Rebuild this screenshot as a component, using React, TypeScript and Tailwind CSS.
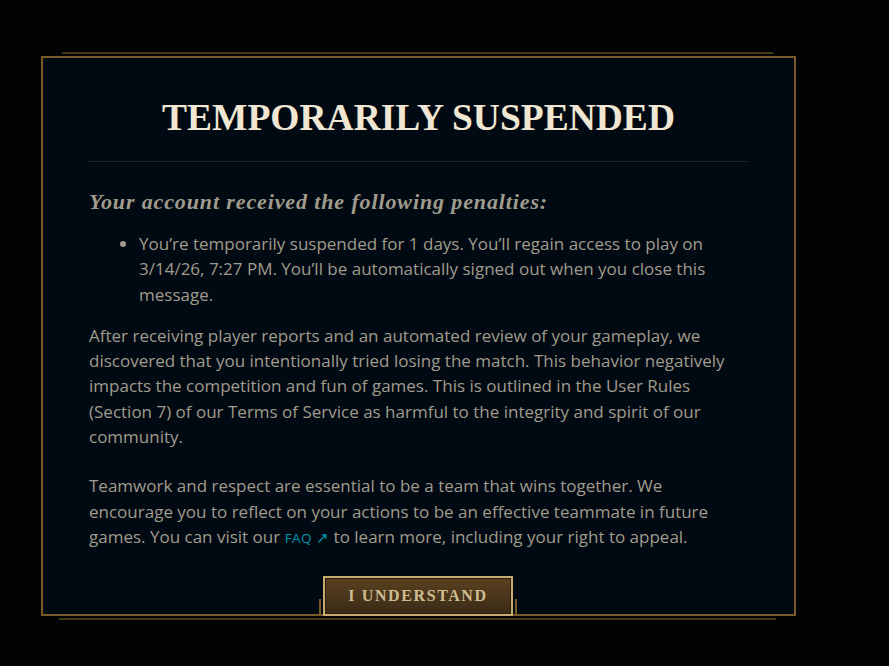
export default function App() {
  return (
    <main className="min-h-[666px] w-full bg-[#020304] pt-[56px] pl-[41px]">
      <div className="relative w-[755px] h-[560px]">
        {/* top decorative rail */}
        <div className="absolute left-[18px] right-[20px] top-[-4px] h-[4px] border-t-2 border-[#463714] [clip-path:polygon(4px_0,calc(100%-4px)_0,100%_100%,0_100%)]" />
        {/* bottom decorative rail */}
        <div className="absolute left-[18px] right-[20px] bottom-[-4px] h-[4px] border-b-2 border-[#463714]" />

        <div className="relative h-full border-2 border-[#785a28] bg-[#010a13] px-[46px] pt-[36px]">
          <h1 className="text-center font-['Liberation_Serif',serif] font-bold text-[37.5px] leading-[48px] text-[#f0e6d2]">
            TEMPORARILY SUSPENDED
          </h1>
          <div className="mt-[19px] h-px bg-[#1e2328]" />

          <h2 className="mt-[26px] font-['Liberation_Serif',serif] italic font-bold text-[22px] leading-[28px] tracking-[0.04em] text-[#a09b8c]">
            Your account received the following penalties:
          </h2>

          <div className="pr-[21px] font-['Open_Sans',sans-serif] text-[17px] leading-[25.3px] text-[#a09b8c]">
            <ul className="mt-[15px] pl-[50px] list-disc">
              <li>
                You’re temporarily suspended for 1 days. You’ll regain access to play on 3/14/26, 7:27 PM. You’ll be automatically signed out when you close this message.
              </li>
            </ul>
            <p className="mt-[16px]">
              After receiving player reports and an automated review of your gameplay, we discovered that you intentionally tried losing the match. This behavior negatively impacts the competition and fun of games. This is outlined in the User Rules (Section 7) of our Terms of Service as harmful to the integrity and spirit of our community.
            </p>
            <p className="mt-[24px]">
              Teamwork and respect are essential to be a team that wins together. We encourage you to reflect on your actions to be an effective teammate in future games. You can visit our{" "}
              <a className="inline-block leading-none text-[13.5px] tracking-[0.03em] text-[#0397ab]">
                FAQ <span className="text-[15px]">↗</span>
              </a>{" "}
              to learn more, including your right to appeal.
            </p>
          </div>
        </div>

        {/* button */}
        <div className="absolute bottom-0 left-[278px] flex items-end">
          <div className="w-[2px] h-[15px] bg-[#785a28] mb-[2px]" />
          <button className="mx-[2px] w-[190px] h-[40px] border-2 border-[#c8aa6e] bg-gradient-to-b from-[#5b4020] to-[#3a2b16] shadow-[inset_0_0_0_1px_#2a1f10] font-['Liberation_Serif',serif] font-bold text-[16px] tracking-[0.1em] text-[#cdbe91]">
            I UNDERSTAND
          </button>
          <div className="w-[2px] h-[15px] bg-[#785a28] mb-[2px]" />
        </div>
      </div>
    </main>
  );
}
